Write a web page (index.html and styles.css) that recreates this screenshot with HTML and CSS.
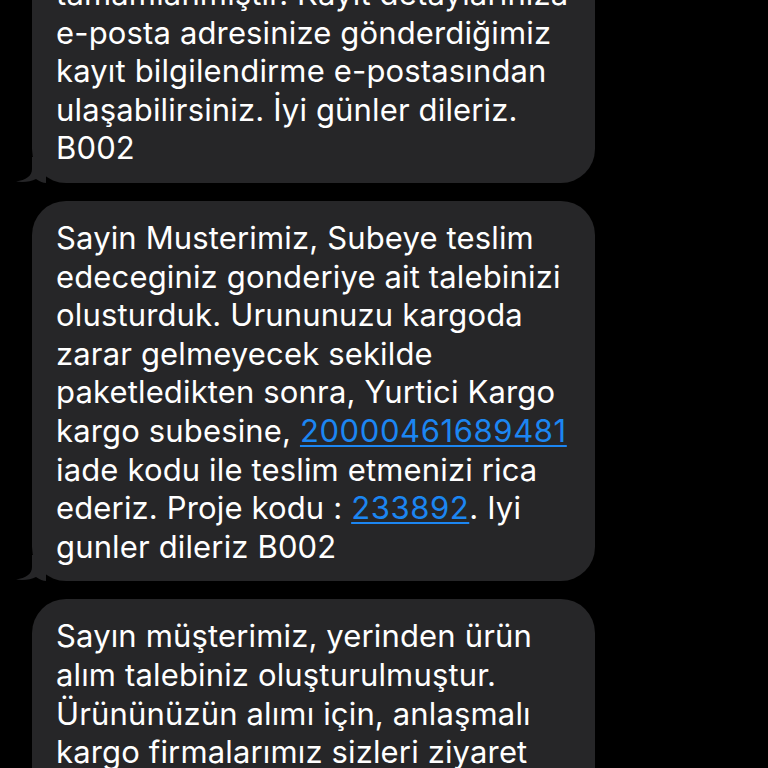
FILE: index.html
```html
<!DOCTYPE html>
<html lang="tr">
<head>
<meta charset="utf-8">
<link rel="stylesheet" href="styles.css">
</head>
<body>
<div class="thread">
  <div class="bubble">
    <p class="msg">tamamlanmıştır. Kayıt detaylarınıza<br>e-posta adresinize gönderdiğimiz<br>kayıt bilgilendirme e-postasından<br>ulaşabilirsiniz. İyi günler dileriz.<br>B002</p>
    <svg class="tail" viewBox="0 0 30 26" aria-hidden="true"><path d="M16 0 L16 12 C16 19 10 23 0 24.5 C8 25.5 15 24.5 20 22 C24 24.5 27 26 30 26 L30 0 Z"/></svg>
  </div>
  <div class="bubble">
    <p class="msg">Sayin Musterimiz, Subeye teslim<br>edeceginiz gonderiye ait talebinizi<br>olusturduk. Urununuzu kargoda<br>zarar gelmeyecek sekilde<br>paketledikten sonra, Yurtici Kargo<br>kargo subesine, <a class="link">20000461689481</a><br>iade kodu ile teslim etmenizi rica<br>ederiz. Proje kodu : <a class="link">233892</a>. Iyi<br>gunler dileriz B002</p>
    <svg class="tail" viewBox="0 0 30 26" aria-hidden="true"><path d="M16 0 L16 12 C16 19 10 23 0 24.5 C8 25.5 15 24.5 20 22 C24 24.5 27 26 30 26 L30 0 Z"/></svg>
  </div>
  <div class="bubble">
    <p class="msg">Sayın müşterimiz, yerinden ürün<br>alım talebiniz oluşturulmuştur.<br>Ürününüzün alımı için, anlaşmalı<br>kargo firmalarımız sizleri ziyaret<br>edecektir.</p>
  </div>
</div>
</body>
</html>
```

FILE: styles.css
```css
html, body {
  margin: 0;
  padding: 0;
  background: #000;
}
body {
  width: 768px;
  height: 768px;
  overflow: hidden;
  font-family: Inter, "Noto Sans", sans-serif;
}
.thread {
  display: flex;
  flex-direction: column;
  gap: 18px;
  padding-left: 32px;
  margin-top: -43px;
}
.bubble {
  position: relative;
  width: 563px;
  box-sizing: border-box;
  background: #262628;
  border-radius: 34px;
  padding: 18px 24px 15px 24px;
}
.msg {
  margin: 0;
  color: #fff;
  font-size: 31px;
  line-height: 38.6px;
  white-space: nowrap;
  letter-spacing: 0.15px;
}
.link {
  color: #1c86f2;
  text-decoration: underline;
  text-decoration-thickness: 1.5px;
  text-underline-offset: 3px;
  letter-spacing: 0.6px;
}
.tail {
  position: absolute;
  left: -16px;
  bottom: 0;
  width: 30px;
  height: 26px;
  fill: #262628;
}
```
